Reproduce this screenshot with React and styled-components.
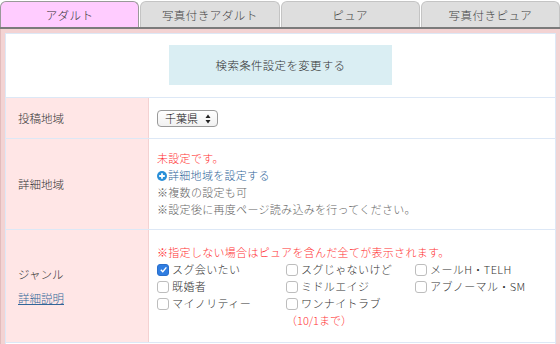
import React from 'react'
import styled, { createGlobalStyle } from 'styled-components'

const GlobalStyle = createGlobalStyle`
  html, body {
    margin: 0;
    padding: 0;
    background: #fff;
  }
  body {
    font-family: 'Noto Sans CJK JP', 'Noto Sans', sans-serif;
    font-weight: 300;
    color: #333;
  }
`

const tabs = ['アダルト', '写真付きアダルト', 'ピュア', '写真付きピュア']

const genres = [
  { label: 'スグ会いたい', checked: true },
  { label: 'スグじゃないけど' },
  { label: 'メールH・TELH' },
  { label: '既婚者' },
  { label: 'ミドルエイジ' },
  { label: 'アブノーマル・SM' },
  { label: 'マイノリティー' },
  { label: 'ワンナイトラブ', note: '（10/1まで）' },
]

export default function App() {
  return (
    <>
      <GlobalStyle />
      <Wrap>
        <TabBar>
          {tabs.map((t, i) => (
            <Tab key={t} active={i === 0}>{t}</Tab>
          ))}
        </TabBar>
        <Frame>
          <Panel>
            <ButtonArea>
              <ChangeButton>検索条件設定を変更する</ChangeButton>
            </ButtonArea>

            <Row>
              <Label>投稿地域</Label>
              <Value pad="12px 8px 11px">
                <SelectBox>
                  千葉県
                  <SelectArrows viewBox="0 0 6 10">
                    <path d="M3 0.5 L5.5 4 L0.5 4 Z" fill="#222" />
                    <path d="M3 9.5 L5.5 6 L0.5 6 Z" fill="#222" />
                  </SelectArrows>
                </SelectBox>
              </Value>
            </Row>

            <Row>
              <Label>詳細地域</Label>
              <Value pad="11px 8px 11px">
                <Line color="#ff3333">未設定です。</Line>
                <Line color="#2f6699">
                  <PlusIcon viewBox="0 0 10 10">
                    <circle cx="5" cy="5" r="5" fill="#2a8fd8" />
                    <path d="M5 2.2 V7.8 M2.2 5 H7.8" stroke="#fff" strokeWidth="1.8" />
                  </PlusIcon>
                  詳細地域を設定する
                </Line>
                <Line color="#666">※複数の設定も可</Line>
                <Line color="#666">※設定後に再度ページ読み込みを行ってください。</Line>
              </Value>
            </Row>

            <Row>
              <Label>
                <LabelStack>
                  <span>ジャンル</span>
                  <HelpLink>詳細説明</HelpLink>
                </LabelStack>
              </Label>
              <Value pad="14px 8px 13px">
                <Line color="#ff3333">※指定しない場合はピュアを含んだ全てが表示されます。</Line>
                <GenreGrid>
                  {genres.map(g => (
                    <GenreItem key={g.label}>
                      <CheckRow>
                        <Check checked={g.checked}>
                          {g.checked && (
                            <svg width="9" height="9" viewBox="0 0 10 10">
                              <path d="M2 5.2 L4.2 7.4 L8.2 2.6" stroke="#fff" strokeWidth="1.6" fill="none" />
                            </svg>
                          )}
                        </Check>
                        {g.label}
                      </CheckRow>
                      {g.note && <Note>{g.note}</Note>}
                    </GenreItem>
                  ))}
                </GenreGrid>
              </Value>
            </Row>
          </Panel>
        </Frame>
      </Wrap>
    </>
  )
}

const Wrap = styled.div`
  width: 560px;
  height: 344px;
  overflow: hidden;
`

const TabBar = styled.div`
  display: grid;
  grid-template-columns: repeat(4, 1fr);
  column-gap: 1px;
  padding-top: 1px;
  border-bottom: 2px solid #7b7b7b;
`

const Tab = styled.div`
  height: 25px;
  display: flex;
  align-items: center;
  justify-content: center;
  font-size: 11.5px;
  color: ${p => (p.active ? '#333' : '#444')};
  background: ${p => (p.active ? '#ffccff' : '#dedede')};
  border: 1px solid ${p => (p.active ? '#999' : '#c4c4c4')};
  border-bottom: none;
  border-radius: 6px 6px 0 0;
  letter-spacing: 0.5px;
`

const Frame = styled.div`
  background: #f3d3d3;
  border-left: 1px solid #e2bcbc;
  padding: 4px 4px 0 4px;
  height: 320px;
`

const Panel = styled.div`
  background: #fff;
  border: 1px solid #dde8f6;
  border-bottom: none;
  height: 100%;
`

const ButtonArea = styled.div`
  display: flex;
  justify-content: center;
  padding: 11px 0 12px;
  border-bottom: 1px solid #dde8f6;
`

const ChangeButton = styled.div`
  width: 223px;
  height: 40px;
  display: flex;
  align-items: center;
  justify-content: center;
  background: #daeef3;
  font-size: 11.5px;
  color: #333;
  letter-spacing: 0.3px;
`

const Row = styled.div`
  display: grid;
  grid-template-columns: 143px 1fr;
  border-bottom: 1px solid #dde8f6;
`

const Label = styled.div`
  background: #ffe6e6;
  border-right: 1px solid #f4d2d2;
  display: flex;
  align-items: center;
  padding-left: 12px;
  font-size: 11.5px;
  color: #333;
`

const LabelStack = styled.div`
  display: flex;
  flex-direction: column;
  gap: 8px;
`

const HelpLink = styled.span`
  color: #336699;
  text-decoration: underline;
`

const Value = styled.div`
  padding: ${p => p.pad};
  font-size: 11px;
  line-height: 17px;
  display: flex;
  flex-direction: column;
  justify-content: center;
`

const Line = styled.div`
  color: ${p => p.color};
  display: flex;
  align-items: center;
  letter-spacing: 0.3px;
`

const PlusIcon = styled.svg`
  width: 10px;
  height: 10px;
  margin-right: 1px;
`

const SelectBox = styled.div`
  position: relative;
  width: 61px;
  height: 17px;
  box-sizing: border-box;
  border: 1px solid #9a9a9a;
  border-radius: 4px;
  background: linear-gradient(#fff, #f1f1f1);
  font-size: 11px;
  line-height: 15px;
  padding-left: 7px;
  color: #111;
`

const SelectArrows = styled.svg`
  position: absolute;
  right: 6px;
  top: 2.5px;
  width: 6px;
  height: 10px;
`

const GenreGrid = styled.div`
  display: grid;
  grid-template-columns: 129px 129px 1fr;
`

const GenreItem = styled.div`
  display: flex;
  flex-direction: column;
`

const CheckRow = styled.div`
  display: flex;
  align-items: center;
  color: #333;
  letter-spacing: 0.4px;
`

const Check = styled.span`
  width: 12px;
  height: 12px;
  box-sizing: border-box;
  border-radius: 3px;
  margin-right: 3px;
  display: inline-flex;
  align-items: center;
  justify-content: center;
  background: ${p => (p.checked ? '#2f7de1' : '#fff')};
  border: 1px solid ${p => (p.checked ? '#2a6fcb' : '#bdbdbd')};
`

const Note = styled.div`
  color: #ff3333;
`
